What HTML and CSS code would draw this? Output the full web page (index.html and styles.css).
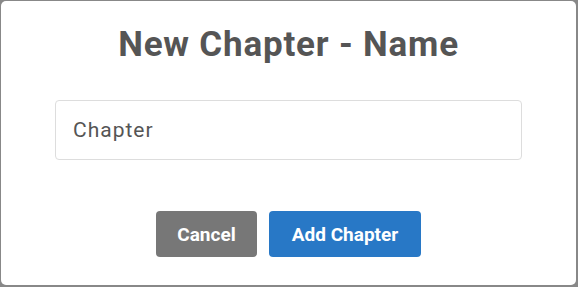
FILE: index.html
```html
<!DOCTYPE html>
<html lang="en">
<head>
    <meta charset="UTF-8">
    <meta name="viewport" content="width=device-width, initial-scale=1.0">
    <title>New Chapter</title>
    <link rel="stylesheet" href="styles.css">
</head>
<body>
    <div class="modal">
        <h2 class="modal-title">New Chapter - Name</h2>
        <div class="modal-body">
            <input class="name-input" type="text" value="Chapter">
        </div>
        <div class="modal-actions">
            <button class="btn btn-cancel">Cancel</button>
            <button class="btn btn-primary">Add Chapter</button>
        </div>
    </div>
</body>
</html>
```

FILE: styles.css
```css
* {
    box-sizing: border-box;
    margin: 0;
    padding: 0;
}

body {
    width: 578px;
    height: 287px;
    background-color: #888888;
    padding: 1px 2px 2px 1px;
    overflow: hidden;
    font-family: Roboto, "Liberation Sans", sans-serif;
}

.modal {
    height: 284px;
    background-color: #ffffff;
    border-radius: 5px;
    display: flex;
    flex-direction: column;
    align-items: center;
    padding-top: 23px;
}

.modal-title {
    font-size: 35px;
    font-weight: bold;
    letter-spacing: 0.8px;
    line-height: 42px;
    color: #555555;
}

.modal-body {
    width: 100%;
    padding: 34px 54px 0 54px;
}

.name-input {
    display: block;
    width: 100%;
    height: 60px;
    border: 1px solid #dddddd;
    border-radius: 4px;
    padding: 0 17px;
    font-family: Roboto, "Liberation Sans", sans-serif;
    font-size: 21px;
    letter-spacing: 1px;
    color: #555555;
    outline: none;
}

.modal-actions {
    display: flex;
    gap: 12px;
    margin-top: 51px;
}

.btn {
    height: 46px;
    border: none;
    border-radius: 4px;
    color: #ffffff;
    font-family: Roboto, "Liberation Sans", sans-serif;
    font-size: 19px;
    font-weight: bold;
}

.btn-cancel {
    width: 101px;
    background-color: #777777;
}

.btn-primary {
    width: 152px;
    background-color: #2878c6;
}
```
